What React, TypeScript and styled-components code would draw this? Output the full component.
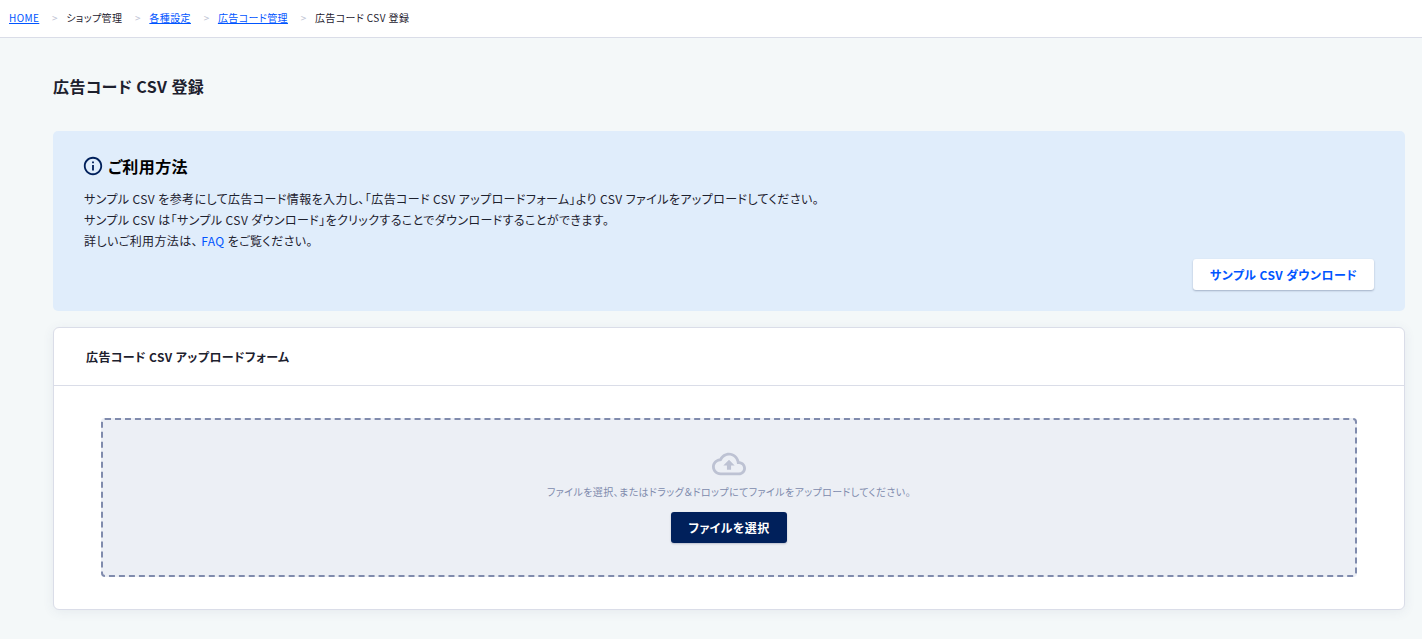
import React from "react";
import styled, { createGlobalStyle } from "styled-components";

const GlobalStyle = createGlobalStyle`
  *, *::before, *::after { box-sizing: border-box; }
  html { height: 100%; }
  body {
    margin: 0;
    min-height: 100%;
    background: #f4f8f9;
    color: #1d212e;
    font-family: "Noto Sans CJK JP", sans-serif;
    font-size: 12px;
    font-feature-settings: "palt";
    letter-spacing: 0.4px;
  }
`;

const Breadcrumb = styled.nav`
  height: 38px;
  padding: 0 9px 2px;
  display: flex;
  align-items: center;
  background: #fff;
  border-bottom: 1px solid #dadde8;
  font-size: 10px;
  line-height: 16px;
  white-space: nowrap;
`;

const Crumb = styled.span`
  & + &::before {
    content: ">";
    display: inline-block;
    margin: 0 8.3px 0 12.7px;
    color: #bdc2d3;
  }
`;

const CrumbLink = styled.a`
  color: #0055ff;
  text-decoration: underline;
`;

const Main = styled.main`
  padding: 35px 17px 29px 53px;
`;

const PageTitle = styled.h1`
  margin: 0 0 31px;
  height: 27px;
  line-height: 27px;
  font-size: 16px;
  font-weight: 700;
`;

const GuidePanel = styled.section`
  height: 180px;
  padding: 23px 31px 20px;
  background: #e0edfb;
  border-radius: 5px;
`;

const GuideHeading = styled.h2`
  margin: 0 0 11px -2px;
  height: 23px;
  display: flex;
  align-items: flex-start;
  gap: 4px;
  color: #000;
  font-size: 16px;
  font-weight: 700;
  line-height: 25px;

  svg { margin-top: 1px; }
`;

const GuideText = styled.p`
  margin: 0;
  line-height: 21px;
`;

const FaqLink = styled.a`
  color: #0055ff;
`;

const GuideActions = styled.div`
  display: flex;
  justify-content: flex-end;
  margin-top: 8px;
`;

const Button = styled.button<{ $primary?: boolean }>`
  height: 31px;
  width: ${(p) => (p.$primary ? "116px" : "181px")};
  padding: 0;
  border: 0;
  border-radius: 3px;
  background: ${(p) => (p.$primary ? "#00205b" : "#fff")};
  color: ${(p) => (p.$primary ? "#fff" : "#0055ff")};
  box-shadow: 0 1px 2px rgba(0, 20, 60, ${(p) => (p.$primary ? 0.22 : 0.28)});
  font: inherit;
  font-weight: 700;
  font-feature-settings: "palt";
  letter-spacing: 0.4px;
  line-height: 31px;
`;

const Card = styled.section`
  margin-top: 16px;
  background: #fff;
  border: 1px solid #dadde8;
  border-radius: 6px;
  box-shadow: 0 2px 12px rgba(60, 80, 120, 0.08);
`;

const CardHeader = styled.h2`
  margin: 0;
  height: 58px;
  padding: 0 32px;
  display: flex;
  align-items: center;
  border-bottom: 1px solid #dadde8;
  font-size: 12px;
  font-weight: 700;
`;

const CardBody = styled.div`
  padding: 32px 47px;
`;

const DropZone = styled.div`
  height: 159px;
  padding-top: 27px;
  display: flex;
  flex-direction: column;
  align-items: center;
  background: #eceff5;
  border: 2px dashed #808bad;
  border-radius: 4px;
`;

const DropText = styled.p`
  margin: 2px 0 12px;
  color: #808bad;
  font-size: 10px;
  line-height: 17px;
`;

const InfoIcon = () => (
  <svg width="22" height="22" viewBox="0 0 24 24" fill="#00205b">
    <path d="M11 7h2v2h-2zm0 4h2v6h-2zm1-9C6.48 2 2 6.48 2 12s4.48 10 10 10 10-4.48 10-10S17.52 2 12 2zm0 18c-4.41 0-8-3.59-8-8s3.59-8 8-8 8 3.59 8 8-3.59 8-8 8z" />
  </svg>
);

const CloudUploadIcon = () => (
  <svg width="34" height="34" viewBox="0 0 24 24" fill="#bdc2d3">
    <path d="M19.35 10.04C18.67 6.59 15.64 4 12 4 9.11 4 6.6 5.64 5.35 8.04 2.34 8.36 0 10.91 0 14c0 3.31 2.69 6 6 6h13c2.76 0 5-2.24 5-5 0-2.64-2.05-4.78-4.65-4.96zM19 18H6c-2.21 0-4-1.79-4-4 0-2.05 1.53-3.76 3.56-3.97l1.07-.11.5-.95C8.08 7.14 9.94 6 12 6c2.62 0 4.88 1.86 5.39 4.43l.3 1.5 1.53.11c1.56.1 2.78 1.41 2.78 2.96 0 1.65-1.35 3-3 3zM8 13h2.55v3h2.9v-3H16l-4-4z" />
  </svg>
);

const crumbs = [
  { label: "HOME", link: true },
  { label: "ショップ管理", link: false },
  { label: "各種設定", link: true },
  { label: "広告コード管理", link: true },
  { label: "広告コード CSV 登録", link: false },
];

export default function App() {
  return (
    <>
      <GlobalStyle />
      <Breadcrumb>
        {crumbs.map((c) => (
          <Crumb key={c.label}>{c.link ? <CrumbLink href="#">{c.label}</CrumbLink> : c.label}</Crumb>
        ))}
      </Breadcrumb>
      <Main>
        <PageTitle>広告コード CSV 登録</PageTitle>
        <GuidePanel>
          <GuideHeading>
            <InfoIcon />
            ご利用方法
          </GuideHeading>
          <GuideText>
            サンプル CSV を参考にして広告コード情報を入力し、「広告コード CSV アップロードフォーム」より CSV ファイルをアップロードしてください。
            <br />
            サンプル CSV は「サンプル CSV ダウンロード」をクリックすることでダウンロードすることができます。
            <br />
            詳しいご利用方法は、 <FaqLink>FAQ</FaqLink> をご覧ください。
          </GuideText>
          <GuideActions>
            <Button>サンプル CSV ダウンロード</Button>
          </GuideActions>
        </GuidePanel>
        <Card>
          <CardHeader>広告コード CSV アップロードフォーム</CardHeader>
          <CardBody>
            <DropZone>
              <CloudUploadIcon />
              <DropText>ファイルを選択、またはドラッグ＆ドロップにてファイルをアップロードしてください。</DropText>
              <Button $primary>ファイルを選択</Button>
            </DropZone>
          </CardBody>
        </Card>
      </Main>
    </>
  );
}
